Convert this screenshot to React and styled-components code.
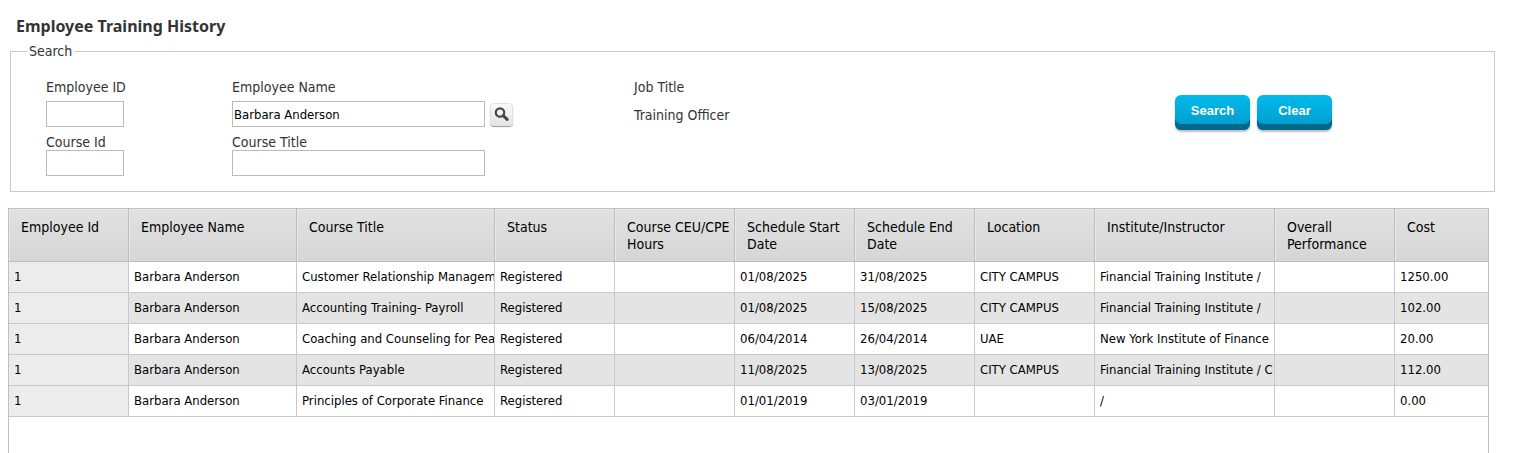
import React from "react";
import styled, { createGlobalStyle } from "styled-components";

const GlobalStyle = createGlobalStyle`
  *, *::before, *::after { box-sizing: border-box; }
  body {
    margin: 0;
    background: #fff;
    color: #333;
    font-family: Tahoma, "DejaVu Sans Condensed", sans-serif;
    font-size: 14px;
    line-height: 17px;
  }
`;

const Page = styled.main`
  display: flex;
  flex-direction: column;
  min-height: 100vh;
  padding: 16px 23px 0 8px;
`;

const Title = styled.h1`
  margin: 0 8px 6px;
  font: bold 16px/21px "Noto Sans", Tahoma, sans-serif;
  color: #333;
`;

const SearchBox = styled.fieldset`
  min-width: 0;
  margin: 0 0 0 2px;
  padding: 0;
  border: 1px solid #c8c8c8;
`;

const Legend = styled.legend`
  margin-left: 16px;
  padding: 0 2px;
`;

const SearchBody = styled.div`
  display: flex;
  align-items: flex-start;
  padding: 19px 162px 15px 35px;
`;

const Fields = styled.div`
  display: grid;
  flex: 1;
  grid-template-columns: 186px 402px 1fr;
  row-gap: 5px;
`;

const Field = styled.div`
  display: flex;
  flex-direction: column;
  gap: ${(p) => (p.$tight ? 0 : 6)}px;
`;

const Label = styled.label`
  line-height: 16px;
`;

const Control = styled.div`
  display: flex;
  align-items: center;
  gap: 5px;
`;

const TextInput = styled.input`
  width: ${(p) => (p.$wide ? 253 : 78)}px;
  height: 26px;
  padding: 1px;
  border: 1px solid #bbb;
  background: #fff;
  color: #000;
  font: inherit;
  font-size: 13px;
`;

const Value = styled.output`
  line-height: 28px;
`;

const LookupButton = styled.button`
  display: grid;
  place-items: center;
  width: 23px;
  height: 23px;
  padding: 0;
  border: 1px solid #e2e2e2;
  border-radius: 4px;
  background: linear-gradient(#fafafa, #e4e4e4);
  box-shadow: 0 1px 1px #999;
`;

const Actions = styled.div`
  display: flex;
  gap: 7px;
  padding-top: 16px;
`;

const ActionButton = styled.button`
  width: 75px;
  height: 35px;
  padding: 0 0 4px;
  border: 0;
  border-radius: 6px;
  background: linear-gradient(#00bbec, #009fd0 29px);
  box-shadow: inset 0 -6px 0 #00688a, 0 2px 2px rgba(0, 0, 0, 0.25);
  color: #fff;
  font: bold 13px/17px "Liberation Sans", Arial, sans-serif;
`;

const GridPanel = styled.section`
  flex: 1;
  margin: 16px 6px 0 0;
  border: 1px solid #c0c0c0;
  border-bottom: 0;
`;

const Table = styled.table`
  width: 100%;
  table-layout: fixed;
  border-collapse: separate;
  border-spacing: 0;
  color: #000;
`;

const HeadCell = styled.th`
  width: ${(p) => (p.$width ? `${p.$width}px` : "auto")};
  height: 53px;
  padding: 10px 0 0 12px;
  border-right: 1px solid #bdbdbd;
  border-bottom: 1px solid #bdbdbd;
  background: linear-gradient(#e1e1e1, #d6d6d6);
  box-shadow: inset 1px 1px 0 #e8e8e8;
  font-weight: normal;
  text-align: left;
  vertical-align: top;
  &:last-child { border-right: 0; }
`;

const Cell = styled.td`
  height: 31px;
  padding: 0 0 2px 5px;
  border-right: 1px solid #c8c8c8;
  border-bottom: 1px solid #c8c8c8;
  overflow: hidden;
  white-space: nowrap;
  font-size: 13px;
  &:last-child { border-right: 0; }
`;

const Row = styled.tr`
  background: #fff;
  &:nth-child(even) { background: #e4e4e4; }
  ${Cell}:first-child { background: #ececec; }
`;

const columns = [
  ["Employee Id", 120],
  ["Employee Name", 168],
  ["Course Title", 198],
  ["Status", 120],
  ["Course CEU/CPE Hours", 120],
  ["Schedule Start Date", 120],
  ["Schedule End Date", 120],
  ["Location", 120],
  ["Institute/Instructor", 180],
  ["Overall Performance", 120],
  ["Cost", null],
];

const person = ["1", "Barbara Anderson"];
const rows = [
  [...person, "Customer Relationship Management", "Registered", "", "01/08/2025", "31/08/2025", "CITY CAMPUS", "Financial Training Institute /", "", "1250.00"],
  [...person, "Accounting Training- Payroll", "Registered", "", "01/08/2025", "15/08/2025", "CITY CAMPUS", "Financial Training Institute /", "", "102.00"],
  [...person, "Coaching and Counseling for Peak", "Registered", "", "06/04/2014", "26/04/2014", "UAE", "New York Institute of Finance", "", "20.00"],
  [...person, "Accounts Payable", "Registered", "", "11/08/2025", "13/08/2025", "CITY CAMPUS", "Financial Training Institute / C", "", "112.00"],
  [...person, "Principles of Corporate Finance", "Registered", "", "01/01/2019", "03/01/2019", "", "/", "", "0.00"],
];

export default function App() {
  return (
    <Page>
      <GlobalStyle />
      <Title>Employee Training History</Title>
      <SearchBox>
        <Legend>Search</Legend>
        <SearchBody>
          <Fields>
            <Field>
              <Label htmlFor="employee-id">Employee ID</Label>
              <TextInput id="employee-id" />
            </Field>
            <Field>
              <Label htmlFor="employee-name">Employee Name</Label>
              <Control>
                <TextInput id="employee-name" $wide defaultValue="Barbara Anderson" />
                <LookupButton type="button" aria-label="Find employee">
                  <svg width="17" height="17" viewBox="0 0 17 17" fill="none" stroke="#4a4646">
                    <circle cx="7" cy="6.5" r="4.2" strokeWidth="2.2" />
                    <path d="M10.4 9.8 14.2 13.4" strokeWidth="3" strokeLinecap="round" />
                  </svg>
                </LookupButton>
              </Control>
            </Field>
            <Field>
              <Label htmlFor="job-title">Job Title</Label>
              <Value id="job-title">Training Officer</Value>
            </Field>
            <Field $tight>
              <Label htmlFor="course-id">Course Id</Label>
              <TextInput id="course-id" />
            </Field>
            <Field $tight>
              <Label htmlFor="course-title">Course Title</Label>
              <TextInput id="course-title" $wide />
            </Field>
          </Fields>
          <Actions>
            <ActionButton type="button">Search</ActionButton>
            <ActionButton type="button">Clear</ActionButton>
          </Actions>
        </SearchBody>
      </SearchBox>
      <GridPanel>
        <Table>
          <thead>
            <tr>
              {columns.map(([name, width]) => (
                <HeadCell key={name} scope="col" $width={width}>{name}</HeadCell>
              ))}
            </tr>
          </thead>
          <tbody>
            {rows.map((row, r) => (
              <Row key={r}>
                {row.map((text, c) => <Cell key={c}>{text}</Cell>)}
              </Row>
            ))}
          </tbody>
        </Table>
      </GridPanel>
    </Page>
  );
}
